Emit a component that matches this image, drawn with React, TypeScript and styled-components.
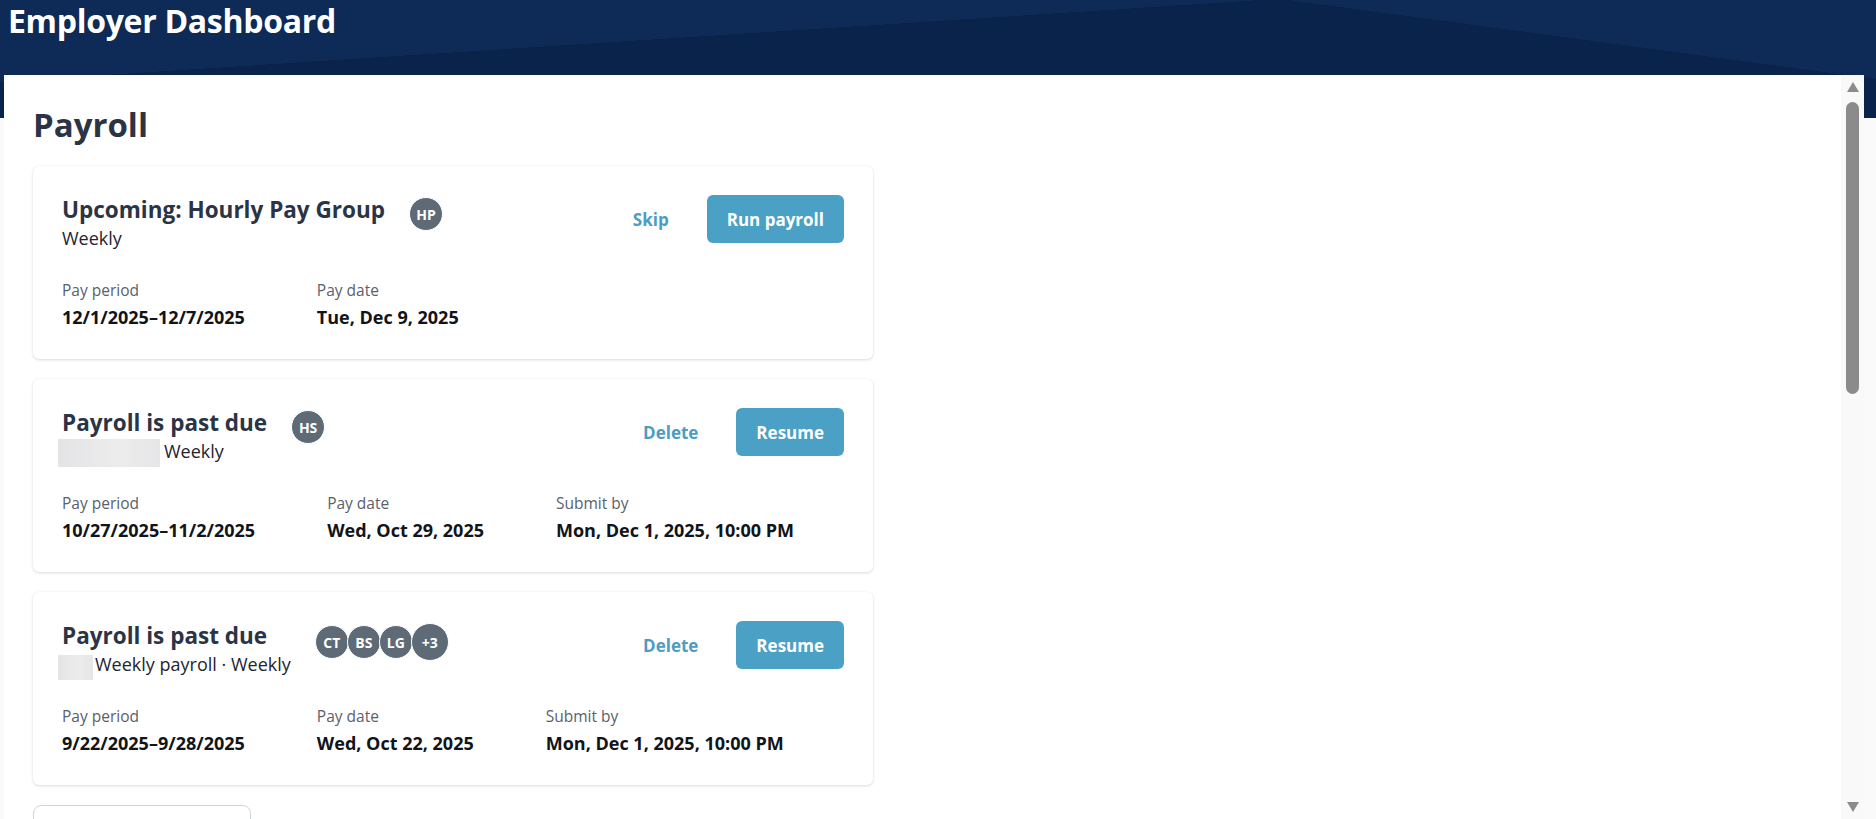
import styled, { createGlobalStyle } from "styled-components";

const GlobalStyle = createGlobalStyle`
  html, body {
    margin: 0;
    padding: 0;
  }

  body {
    background: #fafafa;
    font-family: "Open Sans", "Noto Sans", sans-serif;
    overflow: hidden;
  }

  * {
    box-sizing: border-box;
  }
`;

type Detail = { label: string; value: string };

type Redaction = { w: number; h: number; top: number; after: number };

type PayrollItem = {
  title: string;
  subtitle: string;
  redact?: Redaction;
  avatars: string[];
  extra?: string;
  secondary: string;
  primary: string;
  details: Detail[];
};

const payrolls: PayrollItem[] = [
  {
    title: "Upcoming: Hourly Pay Group",
    subtitle: "Weekly",
    avatars: ["HP"],
    secondary: "Skip",
    primary: "Run payroll",
    details: [
      { label: "Pay period", value: "12/1/2025–12/7/2025" },
      { label: "Pay date", value: "Tue, Dec 9, 2025" },
    ],
  },
  {
    title: "Payroll is past due",
    subtitle: "Weekly",
    redact: { w: 102, h: 28, top: 1, after: 4 },
    avatars: ["HS"],
    secondary: "Delete",
    primary: "Resume",
    details: [
      { label: "Pay period", value: "10/27/2025–11/2/2025" },
      { label: "Pay date", value: "Wed, Oct 29, 2025" },
      { label: "Submit by", value: "Mon, Dec 1, 2025, 10:00 PM" },
    ],
  },
  {
    title: "Payroll is past due",
    subtitle: "Weekly payroll · Weekly",
    redact: { w: 35, h: 25, top: 4, after: 2 },
    avatars: ["CT", "BS", "LG"],
    extra: "+3",
    secondary: "Delete",
    primary: "Resume",
    details: [
      { label: "Pay period", value: "9/22/2025–9/28/2025" },
      { label: "Pay date", value: "Wed, Oct 22, 2025" },
      { label: "Submit by", value: "Mon, Dec 1, 2025, 10:00 PM" },
    ],
  },
];

function PayrollCard({ item }: { item: PayrollItem }) {
  return (
    <Card>
      <CardHead>
        <TitleGroup>
          <TitleBlock>
            <CardTitle>{item.title}</CardTitle>
            <Subtitle>
              {item.redact && (
                <Redacted
                  $w={item.redact.w}
                  $h={item.redact.h}
                  $top={item.redact.top}
                  $after={item.redact.after}
                />
              )}
              {item.subtitle}
            </Subtitle>
          </TitleBlock>
          <AvatarStack>
            {item.avatars.map((a) => (
              <Avatar key={a} $size={34}>
                {a}
              </Avatar>
            ))}
            {item.extra && <Avatar $size={38}>{item.extra}</Avatar>}
          </AvatarStack>
        </TitleGroup>
        <Actions>
          <LinkButton>{item.secondary}</LinkButton>
          <PrimaryButton>{item.primary}</PrimaryButton>
        </Actions>
      </CardHead>
      <Details>
        {item.details.map((d) => (
          <DetailCol key={d.label}>
            <DetailLabel>{d.label}</DetailLabel>
            <DetailValue>{d.value}</DetailValue>
          </DetailCol>
        ))}
      </Details>
    </Card>
  );
}

function App() {
  return (
    <>
      <GlobalStyle />
      <Page>
        <AppTitle>Employer Dashboard</AppTitle>
        <Panel>
          <PanelContent>
            <PageHeading>Payroll</PageHeading>
            <CardList>
              {payrolls.map((p, i) => (
                <PayrollCard key={i} item={p} />
              ))}
              <MoreBox />
            </CardList>
          </PanelContent>
          <ScrollRail>
            <ArrowUp />
            <Thumb />
            <ArrowDown />
          </ScrollRail>
        </Panel>
      </Page>
    </>
  );
}

const light = "#0e2a57";
const dark = "#09234a";

const Page = styled.div`
  height: 100vh;
  display: flex;
  flex-direction: column;
  background-color: #fafafa;
  background-image: linear-gradient(176.29deg, ${light} 81.6px, transparent 81.6px),
    linear-gradient(187.64deg, ${light} 78.2px, transparent 78.2px),
    linear-gradient(${dark}, ${dark});
  background-size: 100% 118px;
  background-repeat: no-repeat;
`;

const AppTitle = styled.h1`
  margin: 0;
  height: 75px;
  flex-shrink: 0;
  padding-left: 8px;
  font-size: 32px;
  line-height: 41px;
  font-weight: 700;
  color: #ffffff;
  letter-spacing: -0.3px;
`;

const Panel = styled.main`
  flex: 1;
  min-height: 0;
  margin: 0 12px 0 4px;
  background: #ffffff;
  display: flex;
`;

const PanelContent = styled.div`
  flex: 1;
  min-width: 0;
  overflow: hidden;
  padding: 30px 29px 0;
`;

const ScrollRail = styled.div`
  width: 23px;
  flex-shrink: 0;
  background: #f9f9f9;
  display: flex;
  flex-direction: column;
  align-items: center;
  padding: 7px 0;
`;

const ArrowUp = styled.span`
  width: 0;
  height: 0;
  border-left: 6.5px solid transparent;
  border-right: 6.5px solid transparent;
  border-bottom: 10px solid #8b8b8b;
`;

const ArrowDown = styled.span`
  margin-top: auto;
  width: 0;
  height: 0;
  border-left: 6.5px solid transparent;
  border-right: 6.5px solid transparent;
  border-top: 10px solid #8b8b8b;
`;

const Thumb = styled.span`
  margin-top: 10px;
  width: 13px;
  height: 292px;
  border-radius: 7px;
  background: #8b8b8b;
`;

const PageHeading = styled.h2`
  margin: 0 0 21px;
  font-size: 33px;
  line-height: 40px;
  font-weight: 700;
  color: #2b3445;
`;

const CardList = styled.div`
  width: 840px;
  display: flex;
  flex-direction: column;
  gap: 20px;
`;

const Card = styled.section`
  background: #ffffff;
  border-radius: 6px;
  box-shadow: 0 1px 3px rgba(0, 0, 0, 0.14), 0 0 1px rgba(0, 0, 0, 0.08);
  padding: 29px 29px 30px;
`;

const CardHead = styled.div`
  display: flex;
  justify-content: space-between;
  align-items: flex-start;
`;

const TitleGroup = styled.div`
  display: flex;
  align-items: flex-start;
  gap: 24px;
`;

const TitleBlock = styled.div`
  display: flex;
  flex-direction: column;
`;

const CardTitle = styled.h3`
  margin: 0;
  font-size: 22.5px;
  line-height: 30px;
  font-weight: 700;
  color: #2b3445;
`;

const Subtitle = styled.div`
  font-size: 18px;
  line-height: 26px;
  color: #1f2430;
  white-space: nowrap;
`;

const Redacted = styled.span<{ $w: number; $h: number; $top: number; $after: number }>`
  display: inline-block;
  width: ${(p) => p.$w}px;
  height: ${(p) => p.$h}px;
  vertical-align: top;
  margin: ${(p) => p.$top}px ${(p) => p.$after}px ${(p) => 26 - p.$h - p.$top}px -4px;
  background: linear-gradient(90deg, #e4e4e6, #ececed 60%, #e6e6e8);
`;

const AvatarStack = styled.div`
  display: flex;
  align-items: center;
  margin-top: 2px;
`;

const Avatar = styled.span<{ $size: number }>`
  width: ${(p) => p.$size}px;
  height: ${(p) => p.$size}px;
  border-radius: 50%;
  border: 1px solid #ffffff;
  background: #5e6a75;
  color: #ffffff;
  font-size: 14px;
  font-weight: 700;
  display: flex;
  align-items: center;
  justify-content: center;

  & + & {
    margin-left: -2px;
  }
`;

const Actions = styled.div`
  display: flex;
  align-items: center;
  gap: 38px;
`;

const LinkButton = styled.button`
  border: 0;
  padding: 0;
  background: none;
  font-family: inherit;
  font-size: 17px;
  font-weight: 700;
  color: #4e9cc2;
  cursor: pointer;
`;

const PrimaryButton = styled.button`
  height: 48px;
  padding: 0 20px;
  border: 0;
  border-radius: 6px;
  background: #4ba0c5;
  color: #ffffff;
  font-family: inherit;
  font-size: 17px;
  font-weight: 700;
  cursor: pointer;
`;

const Details = styled.div`
  display: flex;
  gap: 72px;
  margin-top: 29px;
`;

const DetailCol = styled.div`
  display: flex;
  flex-direction: column;
  gap: 5px;
`;

const DetailLabel = styled.span`
  font-size: 15.5px;
  line-height: 20px;
  color: #59616b;
`;

const DetailValue = styled.span`
  font-size: 18px;
  line-height: 24px;
  font-weight: 700;
  color: #111418;
`;

const MoreBox = styled.div`
  width: 218px;
  height: 48px;
  border: 1px solid #cdd6df;
  border-radius: 8px;
  background: #ffffff;
`;

export default App;
